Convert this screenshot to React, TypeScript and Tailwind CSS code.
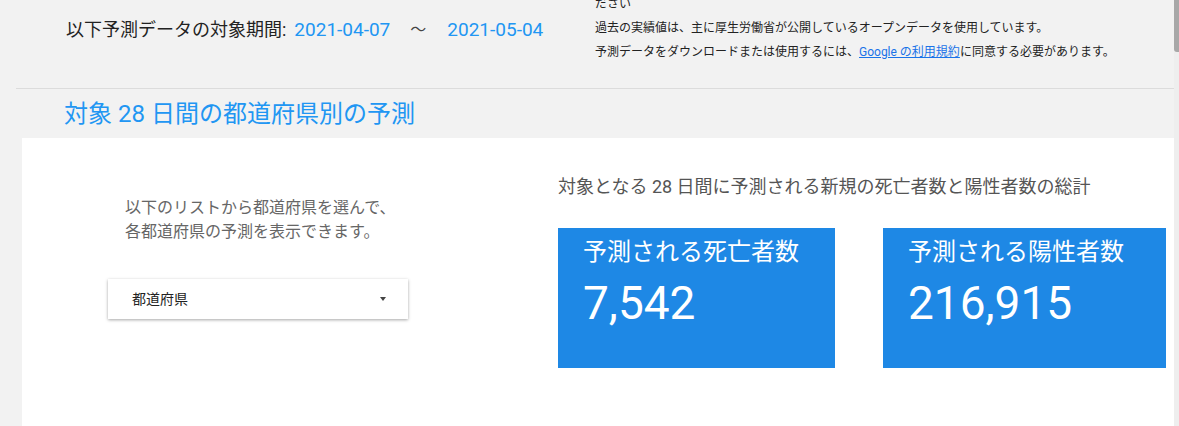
import React from "react";

const FONT = "font-['Roboto','Noto_Sans_CJK_JP',sans-serif]";

const StatCard = ({ title, value, width }: { title: string; value: string; width: string }) => (
  <div className={`flex h-[140px] ${width} flex-col bg-[#1e88e5] pl-[25px] pt-[7px] text-white`}>
    <div className="text-[24px] leading-[34px]">{title}</div>
    <div className="mt-[6px] text-[46px] leading-[56px]">{value}</div>
  </div>
);

export default function App() {
  return (
    <div className={`flex h-[426px] w-full overflow-hidden bg-[#f2f2f2] ${FONT}`}>
      <div className="flex min-w-0 flex-1 flex-col">
        {/* period + notes */}
        <header className="flex h-[88px] items-start overflow-hidden">
          <div className="flex w-[595px] shrink-0 items-center whitespace-nowrap pl-[66px] pt-[17px] leading-[26px]">
            <span className="text-[18px] text-[#222]">以下予測データの対象期間:</span>
            <span className="ml-[8px] text-[19px] text-[#2196f3]">2021-04-07</span>
            <span className="ml-[20px] text-[16px] text-[#444]">～</span>
            <span className="ml-[21px] text-[19px] text-[#2196f3]">2021-05-04</span>
          </div>
          <div className="-mt-[8px] flex flex-col whitespace-nowrap text-[12px] leading-[24px] text-[#222]">
            <span>ださい</span>
            <span>過去の実績値は、主に厚生労働省が公開しているオープンデータを使用しています。</span>
            <span>
              予測データをダウンロードまたは使用するには、
              <a href="#" className="text-[#1a73e8] underline">
                Google の利用規約
              </a>
              に同意する必要があります。
            </span>
          </div>
        </header>
        <div className="ml-[16px] h-px bg-[#dcdcdc]" />

        <h2 className="flex h-[49px] items-center pl-[64px] text-[24px] text-[#2196f3]">
          対象 28 日間の都道府県別の予測
        </h2>

        {/* main card */}
        <section className="ml-[22px] flex flex-1 bg-white">
          <div className="flex w-[518px] shrink-0 flex-col pl-[86px] pt-[58px]">
            <p className="ml-[17px] text-[16px] leading-[24px] text-[#666]">
              以下のリストから都道府県を選んで、
              <br />
              各都道府県の予測を表示できます。
            </p>
            <button className="mt-[35px] flex h-[40px] w-[300px] items-center justify-between bg-white pl-[24px] pr-[22px] text-[14px] text-[#222] shadow-[0_1px_3px_rgba(0,0,0,0.35)]">
              都道府県
              <span className="h-0 w-0 border-x-[3.5px] border-t-[4px] border-x-transparent border-t-[#444]" />
            </button>
          </div>

          <div className="flex flex-col pl-[18px] pt-[37px]">
            <h3 className="whitespace-nowrap text-[18px] leading-[24px] text-[#555]">
              対象となる 28 日間に予測される新規の死亡者数と陽性者数の総計
            </h3>
            <div className="mt-[29px] flex gap-[48px]">
              <StatCard title="予測される死亡者数" value="7,542" width="w-[277px]" />
              <StatCard title="予測される陽性者数" value="216,915" width="w-[283px]" />
            </div>
          </div>
        </section>
      </div>

      {/* scrollbar */}
      <div className="flex w-[5px] flex-col bg-[#eeeeee]">
        <div className="h-[52px] rounded-bl-[3px] bg-[#a8a8a8]" />
      </div>
    </div>
  );
}
